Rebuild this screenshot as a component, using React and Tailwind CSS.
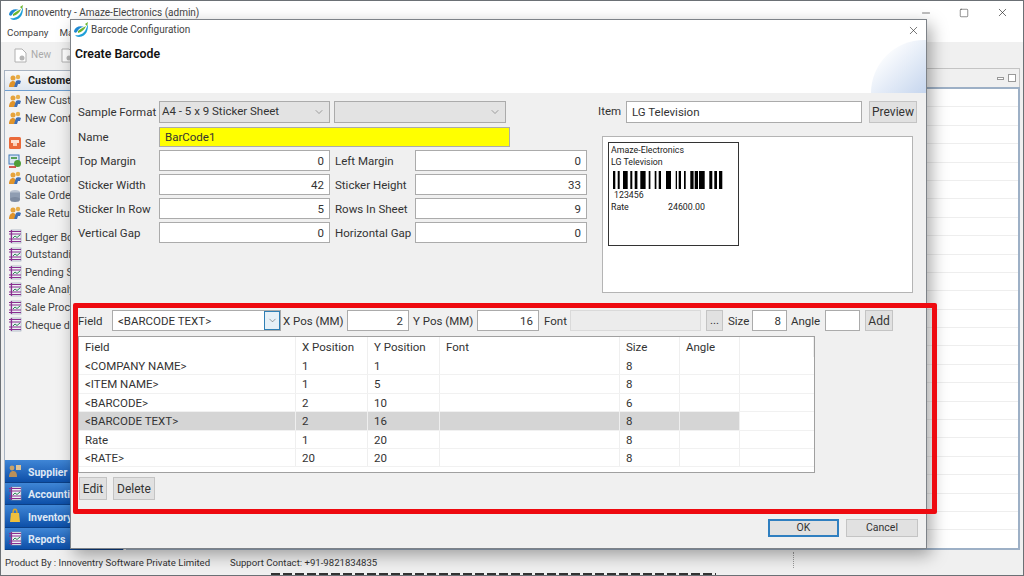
import { ChevronDown, X, Minus, Square } from "lucide-react";

const font = "font-['Roboto','Noto_Sans',sans-serif]";
const labelClass = "pt-[2px] whitespace-nowrap text-[#333]";

function Logo({ size = 16 }) {
  return (
    <svg width={size} height={size} viewBox="0 0 16 16">
      <path d="M1 9c1-4 6-6 10-4-3 0-6 2-7 5-1 1-3 1-3-1z" fill="#1e88d2" />
      <path d="M2 13c4 1 9-1 11-6l2-5c0 6-1 12-9 13-2 0-3-1-4-2z" fill="#1f9fd8" />
      <path d="M5 9c2-2 5-3 8-5-1 3-4 6-8 7z" fill="#6cb52d" />
      <path d="M12 2l3-2-1 4z" fill="#6cb52d" />
    </svg>
  );
}

function People() {
  return (
    <svg width="14" height="14" viewBox="0 0 14 14">
      <circle cx="5" cy="4" r="2.5" fill="#e6a33c" />
      <path d="M1 13c0-4 2-6 4-6s3 2 3 3l-2 3z" fill="#e0932a" />
      <circle cx="10" cy="3" r="2.2" fill="#e8b04c" />
      <path d="M6 13l2-6c1-1 4-1 5 0l-1 3-2 0-1 3z" fill="#3f6fb5" />
    </svg>
  );
}

function SaleIcon() {
  return (
    <svg width="14" height="14" viewBox="0 0 14 14">
      <rect x="1" y="1" width="12" height="12" rx="1.5" fill="#ea6a3a" />
      <rect x="3" y="4" width="8" height="3" fill="#fde3d3" />
      <rect x="5" y="7" width="4" height="3" fill="#fbd0b6" />
    </svg>
  );
}

function ReceiptIcon() {
  return (
    <svg width="14" height="14" viewBox="0 0 14 14">
      <rect x="1" y="1" width="10" height="9" fill="#dbe7f3" stroke="#3f78b5" />
      <rect x="3" y="3" width="6" height="2" fill="#58a05a" />
      <circle cx="9.5" cy="9.5" r="3.5" fill="#4f9d3a" />
      <path d="M1 13h7" stroke="#c9332b" strokeWidth="1.6" />
    </svg>
  );
}

function OrderIcon() {
  return (
    <svg width="14" height="14" viewBox="0 0 14 14">
      <ellipse cx="7" cy="3.5" rx="5" ry="2.5" fill="#b9c2d0" />
      <rect x="2" y="3.5" width="10" height="7" fill="#8f9db2" />
      <ellipse cx="7" cy="10.5" rx="5" ry="2.5" fill="#7d8ba1" />
    </svg>
  );
}

function Ledger() {
  return (
    <svg width="14" height="15" viewBox="0 0 14 15">
      <rect x="3" y="1" width="10" height="13" fill="#eef1f6" stroke="#8d99ad" strokeWidth="0.6" />
      <path d="M1 2.5h12M1 5h12M1 10h12M1 12.5h12" stroke="#8a2f8f" strokeWidth="1.1" />
      <path d="M3.5 1v13" stroke="#8a2f8f" strokeWidth="1.2" />
      <path d="M5 9l2-2 2 1.5 3-2.5" stroke="#2f8a55" fill="none" />
    </svg>
  );
}

function SupplierIcon() {
  return (
    <svg width="14" height="14" viewBox="0 0 14 14">
      <circle cx="4" cy="4" r="2.4" fill="#c8a26a" />
      <path d="M1 13c0-4 2-6 4-6 3 0 4 2 4 6z" fill="#b9905a" />
      <rect x="8" y="1" width="5" height="5" fill="#dcc296" />
    </svg>
  );
}

function BagIcon() {
  return (
    <svg width="14" height="15" viewBox="0 0 14 15">
      <path d="M3 5h8l1 9H2z" fill="#efbf3c" />
      <path d="M5 5c0-5 4-5 4 0" stroke="#d9a32a" fill="none" strokeWidth="1.4" />
    </svg>
  );
}

function DocIcon() {
  return (
    <svg width="13" height="15" viewBox="0 0 13 15">
      <path d="M1 1h7l4 4v9H1z" fill="#fff" stroke="#b0b0b0" />
      <circle cx="8" cy="10" r="2.5" fill="#b5b5b5" />
    </svg>
  );
}

function SideItem({ icon, label }) {
  return (
    <div className="flex h-[17.6px] items-center gap-[3px] pl-[3px] whitespace-nowrap">
      <span className="flex w-[14px] shrink-0 justify-center">{icon}</span>
      <span className="pt-[2px]">{label}</span>
    </div>
  );
}

function SideTab({ icon, label }) {
  return (
    <div className="flex h-[22.5px] items-center gap-[6px] border-b border-[#0b3f86] bg-gradient-to-b from-[#3f86d6] to-[#0c4fa8] pl-[3px] text-[10.5px] font-bold whitespace-nowrap text-[#dfe8f5]">
      <span className="flex w-[14px] shrink-0 justify-center">{icon}</span>
      <span className="pt-[4px]">{label}</span>
    </div>
  );
}

function Btn({ children, className = "border border-[#c4c4c4]" }) {
  return (
    <button className={`flex items-center justify-center bg-[#e1e1e1] text-[#333] ${className}`}>
      {children}
    </button>
  );
}

function Input({ value, className = "", right = true }) {
  return (
    <div className={`flex h-full items-center border border-[#ababab] bg-white px-[5px] pt-[2px] whitespace-nowrap text-[#333] ${right ? "justify-end" : ""} ${className}`}>
      {value}
    </div>
  );
}

function Combo({ value, className = "" }) {
  return (
    <div className={`flex h-[22px] items-center justify-between border border-[#ababab] bg-[#e3e3e3] pr-[4px] pl-[2px] whitespace-nowrap text-[#333] ${className}`}>
      <span>{value}</span>
      <ChevronDown size={12} strokeWidth={1} className="text-[#555]" />
    </div>
  );
}

const marginRows = [
  ["Top Margin", "0", "Left Margin", "0"],
  ["Sticker Width", "42", "Sticker Height", "33"],
  ["Sticker In Row", "5", "Rows In Sheet", "9"],
  ["Vertical Gap", "0", "Horizontal Gap", "0"],
];

const fields = [
  ["<COMPANY NAME>", "1", "1", "", "8", ""],
  ["<ITEM NAME>", "1", "5", "", "8", ""],
  ["<BARCODE>", "2", "10", "", "6", ""],
  ["<BARCODE TEXT>", "2", "16", "", "8", ""],
  ["Rate", "1", "20", "", "8", ""],
  ["<RATE>", "20", "20", "", "8", ""],
];

const bars = [
  [0, 2.3], [4.7, 2], [10, 4.7], [17.3, 2], [21.7, 2.7], [27.3, 5.3], [35.7, 1.7], [41.7, 1.7], [45.7, 2.3], [53, 5],
  [62.7, 1.3], [65.7, 2.3], [71, 1.7], [77.3, 3.3], [81.7, 3.3], [86, 5.7], [96.3, 3], [101.3, 2.7], [106, 3.3],
];

const rowClass = "grid h-[18.4px] grid-cols-[217px_72px_72px_180px_60px_60px_1fr] items-center";
const cellClass = "flex h-full items-center border-r border-[#efefef] pt-[2px] pl-[6px] whitespace-nowrap";

function FieldTable() {
  return (
    <div className="h-[137px] w-[737px] border border-[#a0a0a0] bg-white text-[#333]">
      <div className={`${rowClass} h-[20px]`}>
        {["Field", "X Position", "Y Position", "Font", "Size", "Angle", ""].map((h, i) => (
          <div key={i} className={cellClass}>{h}</div>
        ))}
      </div>
      {fields.map((row, r) => (
        <div key={r} className={`${rowClass} border-b border-[#f1f1f1]`}>
          {row.map((c, i) => (
            <div key={i} className={`${cellClass} ${r === 3 ? "bg-[#d5d5d5]" : ""}`}>{c}</div>
          ))}
          <div className="h-full" />
        </div>
      ))}
    </div>
  );
}

function BarcodeDialog() {
  return (
    <div className="absolute top-[18px] left-[69px] flex h-[530px] w-[857px] flex-col border border-[#7d8288] bg-[#f0f0f0] shadow-[4px_6px_16px_rgba(0,0,0,0.35)]">
      <div className="flex h-[20px] shrink-0 items-center justify-between bg-white pr-[6px] pl-[2px]">
        <div className="flex items-center gap-[2px] text-[10px] text-[#444]">
          <Logo />
          <span>Barcode Configuration</span>
        </div>
        <X size={13} strokeWidth={1.2} className="text-[#333]" />
      </div>
      <div className="relative h-[53px] shrink-0 overflow-hidden bg-white pt-[8px] pl-[4px] text-[12.3px] font-semibold text-[#111]">
        Create Barcode
        <div className="absolute right-0 bottom-0 h-[53px] w-[55px] rounded-tl-full bg-gradient-to-br from-white from-20% to-[#c6d6ee]" />
      </div>

      <div className="flex h-[217px] shrink-0 pt-[8px] pl-[7px]">
        <div className="flex w-[509px] flex-col">
          <div className="flex h-[22px] items-center">
            <span className={`w-[81px] ${labelClass}`}>Sample Format</span>
            <Combo value="A4 - 5 x 9 Sticker Sheet" className="w-[171px]" />
            <Combo value="" className="ml-[4px] w-[172px]" />
          </div>
          <div className="mt-[4px] flex h-[20px] items-center">
            <span className={`w-[81px] ${labelClass}`}>Name</span>
            <div className="flex h-full w-[351px] items-center border border-[#ababab] bg-[#ffff00] px-[5px] pt-[2px] text-[#333]">BarCode1</div>
          </div>
          {marginRows.map(([a, av, b, bv]) => (
            <div key={a} className="mt-[3px] flex h-[21px] items-center">
              <span className={`w-[81px] ${labelClass}`}>{a}</span>
              <Input value={av} className="w-[171px]" />
              <span className={`w-[85px] pl-[5px] ${labelClass}`}>{b}</span>
              <Input value={bv} className="w-[172px]" />
            </div>
          ))}
        </div>
        <div className="ml-[11px] flex flex-col">
          <div className="flex h-[22px] items-center">
            <span className="w-[28px] text-[#333]">Item</span>
            <Input value="LG Television" right={false} className="w-[236px]" />
            <Btn className="ml-[7px] h-full w-[48px] border border-[#c4c4c4] text-[12px]">Preview</Btn>
          </div>
          <div className="mt-[13px] ml-[4px] h-[157px] w-[311px] border border-[#b4b4b4] bg-white p-[5px]">
            <div className="h-[104px] w-[131px] border border-[#333] pt-[1px] pl-[2px] text-[8.8px] leading-[12px] text-[#222]">
              <div>Amaze-Electronics</div>
              <div>LG Television</div>
              <svg width="111" height="18" className="mt-[3px] ml-[2px]">
                {bars.map(([x, w]) => (
                  <rect key={x} x={x} y="0" width={w} height="18" fill="#000" />
                ))}
              </svg>
              <div className="pl-[3px]">123456</div>
              <div className="flex"><span className="w-[57px]">Rate</span><span>24600.00</span></div>
            </div>
          </div>
        </div>
      </div>

      <div className="flex flex-col pl-[7px]">
        <div className="flex h-[21px] items-center text-[#333]">
          <span className={`w-[34px] ${labelClass}`}>Field</span>
          <div className="flex h-full w-[169px] items-center justify-between border border-[#ababab] bg-white pl-[5px]">
            <span className={labelClass}>&lt;BARCODE TEXT&gt;</span>
            <span className="flex h-full w-[16px] items-center justify-center border border-[#2f7fb5] bg-[#e6f0f7]">
              <ChevronDown size={11} strokeWidth={1} />
            </span>
          </div>
          <span className={`w-[66px] pl-[2px] ${labelClass}`}>X Pos (MM)</span>
          <Input value="2" className="w-[62px]" />
          <span className={`w-[68px] pl-[4px] ${labelClass}`}>Y Pos (MM)</span>
          <Input value="16" className="w-[62px]" />
          <span className={`w-[31px] pl-[5px] ${labelClass}`}>Font</span>
          <div className="h-full w-[131px] border border-[#dadada] bg-[#ececec]" />
          <Btn className="ml-[5px] h-full w-[17px] border border-[#c4c4c4]">...</Btn>
          <span className={`w-[29px] pl-[5px] ${labelClass}`}>Size</span>
          <Input value="8" className="w-[35px]" />
          <span className={`w-[38px] pl-[4px] ${labelClass}`}>Angle</span>
          <Input value="" className="w-[35px]" />
          <Btn className="ml-[5px] h-full w-[28px] border border-[#c4c4c4] text-[12px]">Add</Btn>
        </div>
        <div className="mt-[5px]"><FieldTable /></div>
        <div className="mt-[4px] flex h-[23px] gap-[6px] pl-[1px] text-[12px]">
          <Btn className="w-[28px] border border-[#c4c4c4]">Edit</Btn>
          <Btn className="w-[42px] border border-[#c4c4c4]">Delete</Btn>
        </div>
      </div>

      <div className="mt-[19px] flex h-[18px] justify-end gap-[7px] pr-[8px] text-[10.5px]">
        <Btn className="w-[71px] border-2 border-[#2f7fc0]">OK</Btn>
        <Btn className="w-[72px] border border-[#c4c4c4]">Cancel</Btn>
      </div>

      {/* red annotation around the field editor */}
      <div className="pointer-events-none absolute top-[283px] left-[2px] h-[211px] w-[864px] rounded-[2px] border-[5px] border-[#ee0a10]" />
    </div>
  );
}

export default function App() {
  return (
    <div className={`relative flex h-[576px] w-[1024px] flex-col overflow-hidden border border-[#6b7075] bg-[#f0f0f0] text-[11.5px] leading-none ${font}`}>
      <div className="flex h-[23px] shrink-0 items-center justify-between bg-white pl-[7px] text-[#444]">
        <div className="flex items-center gap-[1px] text-[10px]">
          <Logo />
          <span>Innoventry - Amaze-Electronics (admin)</span>
        </div>
        <div className="flex items-center gap-[27px] pr-[14px] text-[#222]">
          <Minus size={12} strokeWidth={1.2} />
          <Square size={10} strokeWidth={1.2} />
          <X size={13} strokeWidth={1.2} />
        </div>
      </div>
      <div className="flex h-[18px] shrink-0 items-center gap-[11px] bg-white pl-[6px] text-[9.8px] text-[#444]">
        <span>Company</span>
        <span>Master</span>
      </div>
      <div className="flex h-[26px] shrink-0 items-center gap-[4px] pl-[13px] text-[10px] text-[#aaa]">
        <DocIcon />
        <span>New</span>
        <span className="ml-[6px]"><DocIcon /></span>
      </div>

      <div className="flex min-h-0 flex-1 pl-[3px]">
        <div className="mt-[2px] flex w-[120px] shrink-0 flex-col border border-b-0 border-[#a9b4c2] bg-[#f2f2f2] text-[10.7px] text-[#444]">
          <div className="flex h-[20px] shrink-0 items-center gap-[5px] border-b border-[#6f9fd0] bg-gradient-to-b from-[#f8f8f8] to-[#dfe6ef] pl-[3px] font-bold whitespace-nowrap text-[#222]">
            <span className="w-[14px] shrink-0"><People /></span>
            <span className="pt-[2px] pl-[1px]">Customer</span>
          </div>
          <div className="mt-[1px] shrink-0">
            <SideItem icon={<People />} label="New Customer" />
            <SideItem icon={<People />} label="New Contact" />
          </div>
          <div className="mt-[7px] shrink-0">
            <SideItem icon={<SaleIcon />} label="Sale" />
            <SideItem icon={<ReceiptIcon />} label="Receipt" />
            <SideItem icon={<People />} label="Quotation" />
            <SideItem icon={<OrderIcon />} label="Sale Order" />
            <SideItem icon={<People />} label="Sale Return" />
          </div>
          <div className="mt-[6px] shrink-0">
            <SideItem icon={<Ledger />} label="Ledger Book" />
            <SideItem icon={<Ledger />} label="Outstanding" />
            <SideItem icon={<Ledger />} label="Pending Sale" />
            <SideItem icon={<Ledger />} label="Sale Analysis" />
            <SideItem icon={<Ledger />} label="Sale Process" />
            <SideItem icon={<Ledger />} label="Cheque due" />
          </div>
          <div className="mt-auto shrink-0">
            <SideTab icon={<SupplierIcon />} label="Supplier" />
            <SideTab icon={<Ledger />} label="Accounting" />
            <SideTab icon={<BagIcon />} label="Inventory" />
            <SideTab icon={<Ledger />} label="Reports" />
          </div>
        </div>
        <div className="ml-[2px] flex min-w-0 flex-1 flex-col pr-[3px]">
          <div className="flex h-[19px] shrink-0 items-center justify-end gap-[4px] border border-b-0 border-[#c4c4c4] pr-[3px]">
            <span className="h-[3px] w-[7px] border border-[#999] bg-white" />
            <span className="h-[8px] w-[8px] border border-[#999] bg-white" />
          </div>
          <div className="min-h-0 flex-1 overflow-hidden border-[2px] border-[#9db0c6] bg-white">
            {Array.from({ length: 25 }, (_, i) => (
              <div key={i} className="h-[18.4px] border-b border-[#eeeeee]" />
            ))}
          </div>
        </div>
      </div>

      <div className="relative flex h-[25px] shrink-0 items-center pt-[1px] pl-[4px] text-[9.6px] text-[#333]">
        <span className="w-[225px] whitespace-nowrap">Product By : Innoventry Software Private Limited</span>
        <span className="whitespace-nowrap">Support Contact: +91-9821834835</span>
        <span className="absolute top-[2px] left-[792px] h-[16px] border-l border-dotted border-[#999]" />
        <span className="absolute bottom-0 left-[270px] h-[2px] w-[445px] bg-[repeating-linear-gradient(90deg,#333_0_9px,transparent_9px_12px)]" />
      </div>

      <BarcodeDialog />
    </div>
  );
}
